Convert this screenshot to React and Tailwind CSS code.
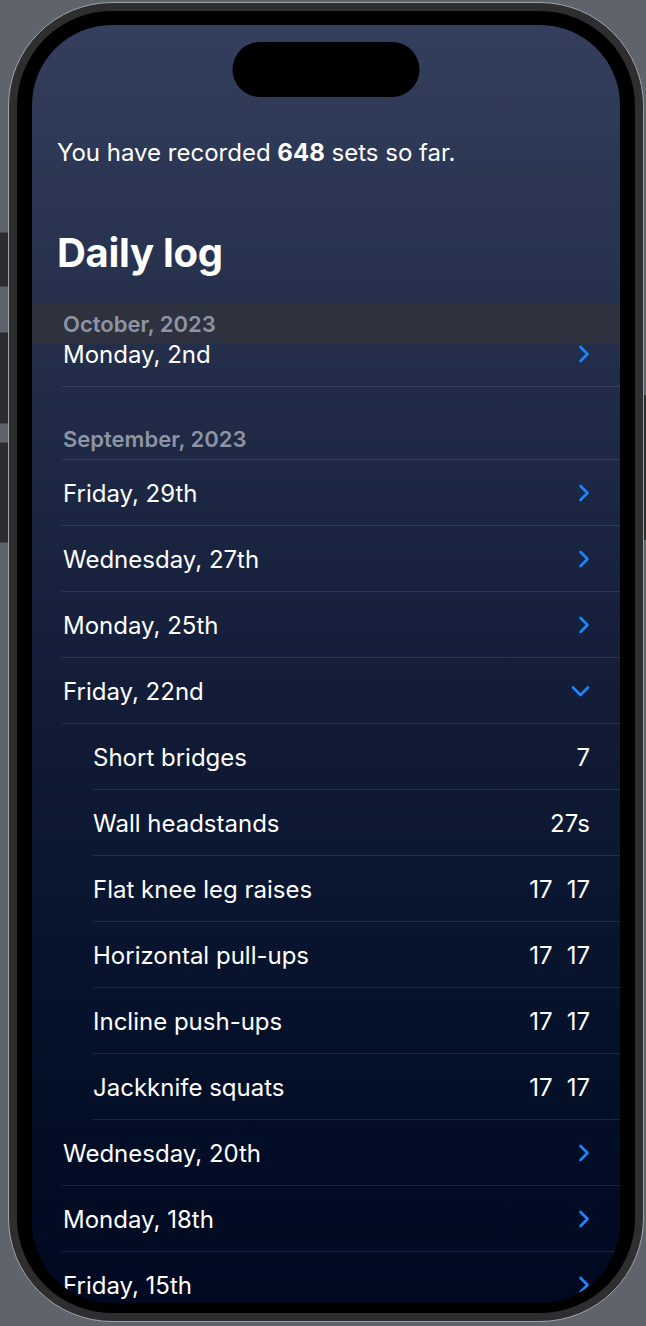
import React from "react";

function ChevronRight() {
  return (
    <svg width="12" height="18" viewBox="0 0 12 18" fill="none">
      <path d="M2.5 2 L9.5 9 L2.5 16" stroke="#1a86ff" strokeWidth="2.6" strokeLinecap="round" strokeLinejoin="round" />
    </svg>
  );
}

function ChevronDown() {
  return (
    <svg width="19" height="12" viewBox="0 0 19 12" fill="none">
      <path d="M2 2.5 L9.5 10 L17 2.5" stroke="#1a86ff" strokeWidth="2.6" strokeLinecap="round" strokeLinejoin="round" />
    </svg>
  );
}

function DayRow({ label, open }) {
  return (
    <div className="ml-[30px] h-[66px] flex items-center justify-between border-b border-white/10 pl-[1px] pr-[30px]">
      <span className="pt-[3px] text-[24px] text-white">{label}</span>
      {open ? <ChevronDown /> : <ChevronRight />}
    </div>
  );
}

function SetRow({ label, values }) {
  return (
    <div className="ml-[61px] h-[66px] flex items-center justify-between border-b border-white/10 pr-[30px]">
      <span className="pt-[3px] text-[24px] text-white">{label}</span>
      <div className="pt-[3px] flex gap-[14px] text-[24px] text-white">
        {values.map((v, i) => (
          <span key={i}>{v}</span>
        ))}
      </div>
    </div>
  );
}

export default function App() {
  return (
    <div className="relative w-[646px] h-[1326px] overflow-hidden bg-[#5f636b] font-['Inter','Noto_Sans',sans-serif] pl-[8px] pt-[2px]">
      {/* side buttons */}
      <div className="absolute left-0 top-[232px] w-[8px] h-[55px] bg-[#2b2c2f] border-y border-[#46484c]" />
      <div className="absolute left-0 top-[332px] w-[8px] h-[92px] bg-[#2b2c2f] border-y border-[#46484c]" />
      <div className="absolute left-0 top-[442px] w-[8px] h-[101px] bg-[#2b2c2f] border-y border-[#46484c]" />
      <div className="absolute right-0 top-[395px] w-[2px] h-[145px] bg-[#2b2c2f]" />

      {/* phone */}
      <div className="w-[636px] h-[1320px] rounded-[104px] bg-[#2e2e30] border border-[#a3a3a6] p-[8px]">
        <div className="w-full h-full rounded-[95px] bg-black px-[15px] pt-[14px] pb-[10px]">
          <div className="relative w-full h-full rounded-[80px] overflow-hidden bg-gradient-to-b from-[#343f5d] via-[#111b36] via-55% to-[#000920]">
            {/* dynamic island */}
            <div className="absolute left-1/2 -translate-x-1/2 top-[17px] w-[187px] h-[55px] rounded-full bg-black z-20" />

            <div className="pt-[112px]">
              <p className="px-[25px] text-[24px] leading-[32px] text-white">
                You have recorded <span className="font-bold">648</span> sets so far.
              </p>
              <h1 className="mt-[60px] px-[25px] text-[40px] leading-[48px] font-bold text-white tracking-[-0.3px]">
                Daily log
              </h1>

              <div className="relative z-10 mt-[27px] h-[39px] flex items-center pl-[31px] pt-[1px] bg-[#2e323f]">
                <span className="text-[22px] font-semibold text-[#8e94a3]">October, 2023</span>
              </div>
              <div className="-mt-[22px]">
                <DayRow label="Monday, 2nd" />
              </div>

              <div className="ml-[30px] h-[73px] flex items-end pb-[6px] pl-[1px] border-b border-white/10">
                <span className="text-[22px] leading-[28px] font-semibold text-[#8e94a3]">September, 2023</span>
              </div>
              <DayRow label="Friday, 29th" />
              <DayRow label="Wednesday, 27th" />
              <DayRow label="Monday, 25th" />
              <DayRow label="Friday, 22nd" open />
              <SetRow label="Short bridges" values={["7"]} />
              <SetRow label="Wall headstands" values={["27s"]} />
              <SetRow label="Flat knee leg raises" values={["17", "17"]} />
              <SetRow label="Horizontal pull-ups" values={["17", "17"]} />
              <SetRow label="Incline push-ups" values={["17", "17"]} />
              <SetRow label="Jackknife squats" values={["17", "17"]} />
              <DayRow label="Wednesday, 20th" />
              <DayRow label="Monday, 18th" />
              <DayRow label="Friday, 15th" />
            </div>
          </div>
        </div>
      </div>
    </div>
  );
}
